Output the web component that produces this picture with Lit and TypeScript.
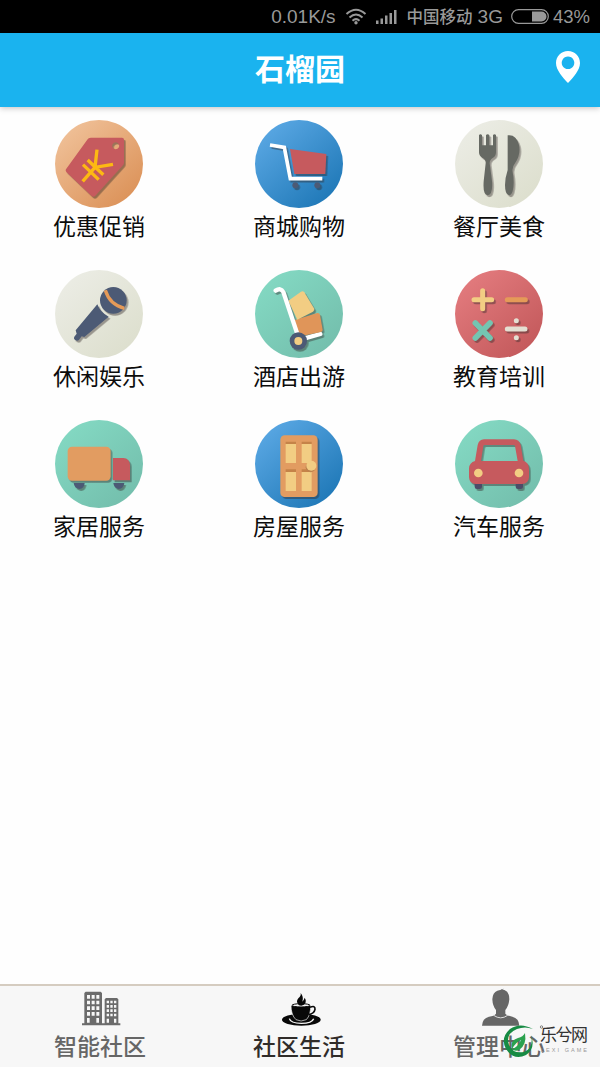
import { LitElement, html, css, svg } from "lit";
import type { SVGTemplateResult } from "lit";
import { customElement, property } from "lit/decorators.js";

type Tone = "orange" | "blue" | "cream" | "teal" | "red";

const tones: Record<Tone, [string, string]> = {
  orange: ["#efbf96", "#dc935a"],
  blue: ["#58a6e2", "#2079b8"],
  cream: ["#ebece4", "#dddfce"],
  teal: ["#83d8c2", "#74bfad"],
  red: ["#e27a7d", "#c45a5c"],
};

const glyphs: Record<string, SVGTemplateResult> = {
  tag: svg`
    <g class="sh">
      <path fill="#c65a5e" fill-rule="evenodd" d="M144 86 Q148 83 153 83 H246 Q252 83 252 89 V158 Q252 162 249 166 L166 257 Q160 263 154 257 L79 186 Q75 181 79 176 Z M227 97 a10.500 10.500 0 1 0 .1 0Z"/>
    </g>
    <path fill="none" stroke="#fdb913" stroke-width="10" d="M171 119 L165 172 L219 163 M165 172 L128 214 M143 150 L190 194 M129 164 L176 209"/>`,
  cart: svg`
    <g class="sh">
      <path fill="#c65a5e" d="M150 117 L259 132 L256 192 H163 Z"/>
      <circle cx="166" cy="226" r="9" fill="#4c5a75"/><circle cx="232" cy="226" r="9" fill="#4c5a75"/>
      <path fill="none" stroke="#fff" stroke-width="11" d="M90 105 L133 112 L151 206 H247"/>
    </g>`,
  dining: svg`
    <g class="sh" fill="#666963">
      <path d="M117 75 Q121 70 126 75 V106 H138 V75 Q143 70 148 75 V106 H159 V75 Q164 70 168 75 V127 Q168 139 158 144 Q149 149 149 160 L156 214 Q159 254 143 256 Q128 254 131 214 L137 160 Q138 149 128 144 Q117 138 117 127 Z"/>
      <path d="M203 76 Q228 72 237 105 Q243 134 225 160 Q215 172 218 187 Q224 219 218 243 Q214 256 207 256 Q195 254 195 225 Q195 204 203 180 Z"/>
    </g>`,
  mic: svg`
    <g class="sh">
      <path fill="#4c5a75" d="M172 133 Q181 158 206 170 L133 231 L125 229 L116 241 Q109 245 103 238 Q101 234 103 230 L110 221 L107 211 Z"/>
      <circle cx="220" cy="121" r="40" fill="#4c5a75"/>
    </g>
    <path fill="none" stroke="#e59a58" stroke-width="10" d="M196 91 Q209 134 253 145"/>`,
  trolley: svg`
    <g class="sh">
      <path fill="none" stroke="#fff" stroke-width="13" stroke-linecap="round" d="M181 239 L241 222"/>
      <path fill="#e09559" d="M164 180 L232 159 Q238 158 240 164 L248 209 Q248 214 243 216 L175 230 Z"/>
      <path fill="#f2cd83" d="M145 122 L183 95 Q189 92 193 97 L222 145 Q225 151 219 155 L172 179 Z"/>
      <path fill="none" stroke="#fff" stroke-width="13" stroke-linecap="round" stroke-linejoin="round" d="M107 92 Q122 82 130 96 L173 225"/>
      <circle cx="175" cy="243" r="26" fill="#4c5a75"/>
    </g>
    <circle cx="175" cy="243" r="12" fill="#f2cd83"/>`,
  math: svg`
    <g class="sh" fill="none" stroke-width="15" stroke-linecap="round">
      <path stroke="#f2cd83" d="M102 119 H155 M128 92 V146"/>
      <path stroke="#e59a58" d="M202 119 H256"/>
      <path stroke="#74c5b1" stroke-width="17" d="M106 189 L150 234 M150 189 L106 234"/>
      <path stroke="#e4dfd2" d="M202 207 H255 M229 182 h.1 M229 233 h.1"/>
    </g>`,
  truck: svg`
    <g class="sh">
      <path fill="#4c5a75" d="M101 219 H134 Q133 236 118 237 Q103 235 101 219 Z M220 219 H253 Q251 236 236 237 Q222 235 220 219 Z"/>
      <rect x="83" y="110" width="129" height="102" rx="13" fill="#e29c61"/>
      <path fill="#c65a5e" d="M219 144 H250 Q269 145 270 165 V211 H219 Z"/>
    </g>`,
  door: svg`
    <g class="sh"><rect x="121" y="76" width="112" height="185" rx="13" fill="#e29c61"/></g>
    <g fill="#c58348"><path d="M137 95h31v8h-31Z M185 95h30v8h-30Z M137 178h31v8h-31Z M185 178h30v8h-30Z"/></g>
    <g fill="#f2cd83"><path d="M137 102h31v57h-31Z M185 102h30v57h-30Z M137 186h31v57h-31Z M185 186h30v57h-30Z"/></g>
    <circle cx="212" cy="172" r="15" fill="#bd824d"/><circle cx="214" cy="167" r="15" fill="#f2cd83"/>`,
  car: svg`
    <g class="sh">
      <path fill="#4c4c68" d="M104 218 h22 v12 q0 7-7 7 h-8 q-7 0-7-7Z M227 218 h22 v12 q0 7-7 7 h-8 q-7 0-7-7Z"/>
      <path fill="#c65a5e" fill-rule="evenodd" d="M132 88 H222 Q238 89 242 105 L250 152 Q267 158 267 177 V202 Q266 221 246 222 H107 Q88 221 87 202 V175 Q88 158 105 153 L113 105 Q117 89 132 88 Z M134 105 Q131 105 130 108 L123 153 H233 L225 108 Q224 105 221 105 Z"/>
    </g>
    <circle cx="115" cy="189" r="13" fill="#f2cd83"/><circle cx="237" cy="189" r="13" fill="#f2cd83"/>`,
};

@customElement("service-tile")
class ServiceTile extends LitElement {
  @property() label = "";
  @property() glyph = "tag";
  @property() tone: Tone = "orange";

  static styles = css`
    :host { display: flex; flex-direction: column; align-items: center; height: 150px; width: 198px; }
    svg { display: block; width: 88px; height: 88px; }
    .sh { filter: drop-shadow(5px 6px 1px rgba(50, 40, 40, 0.42)); }
    .label { font-size: 23px; line-height: 34px; color: #0c0c0c; }
  `;

  render() {
    const [from, to] = tones[this.tone];
    return html`
      <svg viewBox="45 30 264 264">
        <defs>
          <linearGradient id="g" x1="0.15" y1="0.1" x2="0.85" y2="0.9">
            <stop offset="0" stop-color=${from} /><stop offset="1" stop-color=${to} />
          </linearGradient>
        </defs>
        <circle cx="177" cy="162" r="132" fill="url(#g)" />
        ${glyphs[this.glyph]}
      </svg>
      <span class="label">${this.label}</span>
    `;
  }
}

const services: { label: string; glyph: string; tone: Tone }[] = [
  { label: "优惠促销", glyph: "tag", tone: "orange" },
  { label: "商城购物", glyph: "cart", tone: "blue" },
  { label: "餐厅美食", glyph: "dining", tone: "cream" },
  { label: "休闲娱乐", glyph: "mic", tone: "cream" },
  { label: "酒店出游", glyph: "trolley", tone: "teal" },
  { label: "教育培训", glyph: "math", tone: "red" },
  { label: "家居服务", glyph: "truck", tone: "teal" },
  { label: "房屋服务", glyph: "door", tone: "blue" },
  { label: "汽车服务", glyph: "car", tone: "teal" },
];

@customElement("app-root")
class AppRoot extends LitElement {
  static styles = css`
    :host {
      display: flex; flex-direction: column; position: relative; width: 600px; height: 1067px;
      overflow: hidden; background: #fefefe;
      font-family: "Noto Sans CJK SC", sans-serif;
    }
    svg { display: block; flex: none; }
    .status {
      display: flex; align-items: center; justify-content: flex-end; box-sizing: border-box;
      flex: none; height: 33px; padding-right: 10px; background: #000; color: #999;
      font-family: "Liberation Sans", "Noto Sans CJK SC", sans-serif; font-size: 19px; line-height: 33px;
    }
    .speed { margin-right: 9px; }
    .wifi { margin-right: 9px; }
    .bars { margin-right: 9px; }
    .carrier { display: flex; gap: 5px; margin-right: 8px; }
    .cn { font-family: "Noto Sans CJK SC", sans-serif; font-size: 16.5px; font-weight: 500; }
    .battery { margin-right: 4px; }
    .pct { font-size: 18.5px; }
    .header {
      display: grid; grid-template-columns: 60px 1fr 60px; align-items: center; flex: none;
      height: 74px; background: #1ab3ef; box-shadow: 0 1px 6px rgba(0, 0, 0, 0.25);
    }
    .title {
      grid-column: 2; text-align: center; color: #fff; font-size: 30px; font-weight: 700;
      line-height: 68px; padding-bottom: 6px;
    }
    .pin { margin: -6px 0 0 14px; }
    .grid {
      display: grid; grid-template-columns: repeat(3, 200px); align-content: start; flex: 1;
      padding-top: 13px;
    }
    .nav {
      display: grid; grid-template-columns: repeat(3, 200px); flex: none; box-sizing: border-box;
      height: 83px; border-top: 2px solid #d5ccc0; background: #f7f7f7;
    }
    .tab {
      display: flex; flex-direction: column; align-items: center; padding-top: 5px; color: #666;
    }
    .tab svg { overflow: visible; margin-left: 2px; }
    .tab span { font-size: 23px; line-height: 34px; font-weight: 500; margin-top: 1px; }
    .tab.on { color: #302c29; margin-left: -2px; }
    .tab.on svg { margin-left: 4px; }
    .tab.last { margin-left: -2px; }
    .tab.last svg { margin-left: 4px; }
    .mark { position: absolute; left: 500px; top: 1022px; }
  `;

  render() {
    return html`
      <div class="status">
        <span class="speed">0.01K/s</span>
        <svg class="wifi" width="22" height="17" viewBox="0 0 22 17" fill="none" stroke="#999" stroke-width="2">
          <path d="M1.500 6 Q11 -2.500 20.500 6 M4.500 9.500 Q11 3.500 17.500 9.500 M7.500 12.700 Q11 9.500 14.500 12.700" />
          <circle cx="11" cy="14.800" r="1.700" fill="#999" stroke="none" />
        </svg>
        <svg class="bars" width="22" height="16" viewBox="0 0 22 16" fill="#999">
          <path d="M0 11.500h2.500v3.500h-2.500z M4.500 9.500h2.500v5.500h-2.500z M9 6.500h2.500v8.500h-2.500z M13.500 4h2.500v11h-2.500z M18 1h2.500v14h-2.500z" />
        </svg>
        <span class="carrier"><span class="cn">中国移动</span><span>3G</span></span>
        <svg class="battery" width="38" height="15" viewBox="0 0 38 15">
          <rect x="0.700" y="0.700" width="36.600" height="13.600" rx="6.800" fill="none" stroke="#999" stroke-width="1.200" />
          <path fill="#999" d="M21 2.500 H30.500 a5 5 0 0 1 0 10 H21 Z" />
        </svg>
        <span class="pct">43%</span>
      </div>

      <div class="header">
        <div class="title">石榴园</div>
        <svg class="pin" width="28" height="34" viewBox="0 0 28 34">
          <path fill="#fff" fill-rule="evenodd" d="M14 1 C20.800 1 26 6.200 26 13 C26 20 19 28 14 33 C9 28 2 20 2 13 C2 6.200 7.200 1 14 1 Z M14 6.500 a6.300 6.300 0 1 0 .01 0 Z" />
        </svg>
      </div>

      <div class="grid">
        ${services.map(
          (s) => html`<service-tile .label=${s.label} .glyph=${s.glyph} .tone=${s.tone}></service-tile>`
        )}
      </div>

      <div class="nav">
        <div class="tab">
          <svg width="40" height="36" viewBox="123 48 120 108">
            <path fill="#6b6b6b" d="M126 145h7V54l4-4h45l4 4v91h8V73l4-4h33l4 4v72h6v6H126Z" />
            <g fill="#f7f7f7">
              ${[60, 77, 94, 111].map(
                (y) => svg`<path d=${`M141 ${y}h9v11h-9z M155 ${y}h9v11h-9z M169 ${y}h9v11h-9z`} />`
              )}
              <path d="M141 129h8v14h-8z M169 129h8v14h-8z M200 131h7v12h-7z M222 131h7v12h-7z" />
              ${[77, 90, 103, 116].map(
                (y) => svg`<path d=${`M200 ${y}h7v8h-7z M211 ${y}h7v8h-7z M222 ${y}h7v8h-7z`} />`
              )}
            </g>
          </svg>
          <span>智能社区</span>
        </div>
        <div class="tab on">
          <svg width="42" height="36" viewBox="720 48 126 108">
            <ellipse cx="784" cy="134" rx="58" ry="18" fill="#080808" />
            <path fill="none" stroke="#f7f7f7" stroke-width="4" d="M748 131 Q752 145 784 145 Q816 145 821 131" />
            <path fill="#080808" stroke="#f7f7f7" stroke-width="2" d="M753 91 H812 Q813 119 799 134 Q783 142 768 134 Q753 120 753 91Z" />
            <path fill="none" stroke="#080808" stroke-width="5" d="M810 97 Q826 90 825 103 Q823 115 806 119" />
            <ellipse cx="783" cy="91" rx="27" ry="5" fill="#f7f7f7" stroke="#080808" stroke-width="3" />
            <path fill="#080808" d="M782 54 Q784 63 775 70 Q766 80 777 91 Q792 95 797 82 Q799 75 794 68 Q792 75 787 80 Q792 66 782 54Z" />
          </svg>
          <span>社区生活</span>
        </div>
        <div class="tab last">
          <svg width="40" height="36" viewBox="125 48 120 108">
            <path fill="#666" d="M184 43 Q210 43 210 73 Q208 94 198 105 V116 Q203 123 219 125 Q239 130 240 152 H128 Q129 130 149 125 Q165 123 170 116 V105 Q160 94 159 73 Q160 52 174 47 L196 41 Z" />
            <path fill="none" stroke="#ddd" stroke-width="3" d="M163 121 Q184 136 205 121" />
          </svg>
          <span>管理中心</span>
        </div>
      </div>

      <svg class="mark" width="100" height="40" viewBox="0 0 100 40">
        <path fill="#178b43" d="M33 7 Q20 0 10 7 Q0 16 6 27 Q14 39 26 33 Q36 26 31 13 Q34 26 24 30 Q13 32 9 23 Q5 12 17 7 Q25 4 33 7Z" />
        <path fill="#2aa14e" d="M12 27 Q10 18 18 16 Q23 15 25 11 Q27 23 19 28 Q15 30 12 27 Q18 25 21 18 Q16 20 12 27Z" />
        <circle cx="41.500" cy="5" r="1.200" fill="none" stroke="#555" stroke-width="0.700" />
        <text x="40" y="19" font-family="Noto Sans CJK SC, sans-serif" font-size="17" font-weight="400" textLength="48" fill="#333">乐兮网</text>
        <text x="41" y="30" font-family="Liberation Sans, sans-serif" font-size="5.500" textLength="46" fill="#999">LEXI GAME</text>
      </svg>
    `;
  }
}
